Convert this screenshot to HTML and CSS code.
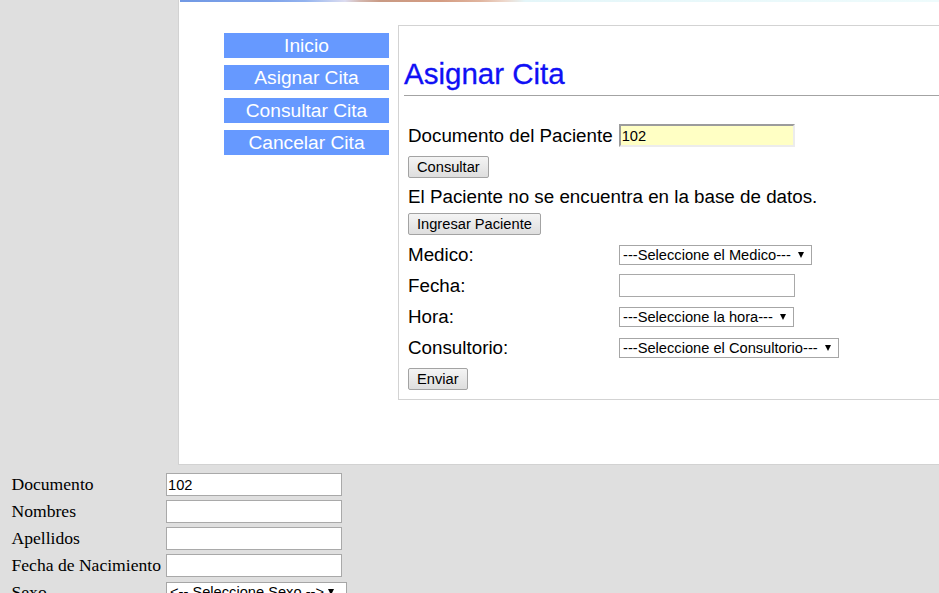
FILE: index.html
```html
<!DOCTYPE html>
<html lang="es">
<head>
<meta charset="utf-8">
<title>Asignar Cita</title>
<link rel="stylesheet" href="styles.css">
</head>
<body>
<div class="page">
  <div class="topbar"></div>
  <div class="main">
    <nav class="menu">
      <a class="menu-item">Inicio</a>
      <a class="menu-item">Asignar Cita</a>
      <a class="menu-item">Consultar Cita</a>
      <a class="menu-item">Cancelar Cita</a>
    </nav>
    <section class="panel">
      <h2 class="title">Asignar Cita</h2>
      <div class="panel-body">
        <div class="doc-row"><span>Documento del Paciente</span><input class="doc-input" type="text" value="102"></div>
        <button class="btn btn-consultar" type="button">Consultar</button>
        <p class="msg">El Paciente no se encuentra en la base de datos.</p>
        <button class="btn btn-ingresar" type="button">Ingresar Paciente</button>
        <div class="fields">
          <div class="field">
            <span class="field-label">Medico:</span>
            <span class="select-wrap"><select class="sel sel-medico"><option>---Seleccione el Medico---</option></select></span>
          </div>
          <div class="field">
            <span class="field-label">Fecha:</span>
            <input class="text-input" type="text">
          </div>
          <div class="field">
            <span class="field-label">Hora:</span>
            <span class="select-wrap"><select class="sel sel-hora"><option>---Seleccione la hora---</option></select></span>
          </div>
          <div class="field">
            <span class="field-label">Consultorio:</span>
            <span class="select-wrap"><select class="sel sel-consultorio"><option>---Seleccione el Consultorio---</option></select></span>
          </div>
        </div>
        <button class="btn btn-enviar" type="button">Enviar</button>
      </div>
    </section>
  </div>
</div>
<form class="patient">
  <label class="p-label">Documento</label><input class="p-input" type="text" value="102">
  <label class="p-label">Nombres</label><input class="p-input" type="text">
  <label class="p-label">Apellidos</label><input class="p-input" type="text">
  <label class="p-label">Fecha de Nacimiento</label><input class="p-input" type="text">
  <label class="p-label">Sexo</label><span class="select-wrap"><select class="sel sel-sexo"><option>&lt;-- Seleccione Sexo --&gt;</option></select></span>
</form>
</body>
</html>
```

FILE: styles.css
```css
html, body {
  margin: 0;
  padding: 0;
  overflow: hidden;
}
body {
  background: #dfdfdf;
  width: 939px;
  height: 593px;
  font-family: "Liberation Sans", Arial, sans-serif;
  color: #000;
}

.page {
  margin-left: 178px;
  height: 464px;
  background: #fff;
  border-left: 1px solid #d2d2d2;
  border-bottom: 1px solid #d2d2d2;
  overflow: hidden;
}
.topbar {
  height: 2px;
  margin-left: 1px;
  background: linear-gradient(to right,
    #7199e4 0px, #7fa3ea 90px, #93b3ef 125px, #b8c9f0 145px,
    #dcdcf0 165px, #d4b8b0 180px, #c99a84 200px, #d49c82 260px,
    #e0b49e 300px, #eed8cc 325px, #e4f6f9 345px, #eefbfc 100%);
}
.main {
  display: flex;
  align-items: flex-start;
  padding-left: 45px;
}

.menu {
  flex: 0 0 165px;
  width: 165px;
  margin-top: 31px;
  display: flex;
  flex-direction: column;
  gap: 7.3px;
}
.menu-item {
  display: block;
  height: 25px;
  line-height: 25px;
  background: #6699ff;
  color: #fff;
  text-align: center;
  font-size: 19.2px;
  text-decoration: none;
}

.panel {
  flex: 0 0 auto;
  margin-left: 9px;
  margin-top: 23px;
  width: 700px;
  border: 1px solid #d3d3d3;
  padding-bottom: 9px;
}
.title {
  margin: 0 0 0 5px;
  padding: 31px 0 4px 0;
  line-height: 34px;
  font-size: 29.5px;
  font-weight: normal;
  color: #1010f5;
  border-bottom: 1px solid #a3a3a3;
  -webkit-text-stroke: 0.3px #1010f5;
}
.panel-body {
  padding-left: 9px;
  display: flex;
  flex-direction: column;
  align-items: flex-start;
  font-size: 18.8px;
}
.doc-row {
  margin-top: 28px;
  height: 23px;
  line-height: 23px;
  display: flex;
  align-items: center;
  gap: 6px;
}
.doc-input {
  box-sizing: border-box;
  width: 176px;
  height: 23px;
  margin: 0;
  padding: 0 1px;
  background: #ffffc4;
  border-top: 2px solid #9c9c9c;
  border-left: 2px solid #9c9c9c;
  border-right: 2px solid #ececec;
  border-bottom: 2px solid #ececec;
  font-family: "Liberation Sans", Arial, sans-serif;
  font-size: 14.67px;
  color: #000;
}

.btn {
  box-sizing: border-box;
  height: 22px;
  margin: 0;
  padding: 0 8px;
  border: 1px solid #a3a3a3;
  border-radius: 2px;
  background: linear-gradient(#f4f4f4, #dedede);
  font-family: "Liberation Sans", Arial, sans-serif;
  font-size: 14.67px;
  color: #000;
  line-height: 20px;
}
.btn-consultar { margin-top: 9px; }
.btn-ingresar { margin-top: 5px; }
.btn-enviar { margin-top: 7px; }

.msg {
  margin: 7px 0 0 0;
  height: 23px;
  line-height: 23px;
}

.fields {
  margin-top: 6px;
  display: flex;
  flex-direction: column;
  gap: 4px;
}
.field {
  display: flex;
  align-items: center;
  height: 27px;
}
.field-label {
  width: 211px;
  line-height: 22px;
}
.text-input {
  box-sizing: border-box;
  width: 176px;
  height: 23px;
  margin: 0;
  border: 1px solid #a9a9a9;
  background: #fff;
  padding: 0 2px;
}

.select-wrap {
  position: relative;
  display: inline-block;
  height: 20px;
}
.select-wrap::after {
  content: "";
  position: absolute;
  right: 8px;
  top: 7px;
  border-left: 3.5px solid transparent;
  border-right: 3.5px solid transparent;
  border-top: 6px solid #000;
  pointer-events: none;
}
.sel {
  -webkit-appearance: none;
  appearance: none;
  box-sizing: border-box;
  height: 20px;
  margin: 0;
  padding: 0 0 0 3px;
  border: 1px solid #a6a6a6;
  border-radius: 0;
  background: #fff;
  font-family: "Liberation Sans", Arial, sans-serif;
  font-size: 14.67px;
  line-height: 18px;
  color: #000;
  display: block;
}
.sel-medico { width: 193px; }
.sel-hora { width: 175px; }
.sel-consultorio { width: 220px; }
.sel-sexo { width: 181px; }

.patient {
  margin: 8px 0 0 0;
  padding-left: 11.5px;
  display: grid;
  grid-template-columns: 154.5px 176px;
  grid-auto-rows: 22px;
  row-gap: 5px;
  align-items: start;
}
.p-label {
  font-family: "Liberation Serif", "Times New Roman", serif;
  font-size: 17.6px;
  line-height: 22px;
  white-space: nowrap;
}
.p-input {
  box-sizing: border-box;
  width: 176px;
  height: 23px;
  margin: 0;
  padding: 0 1px;
  border: 1px solid #a9a9a9;
  background: #fff;
  font-family: "Liberation Sans", Arial, sans-serif;
  font-size: 14.67px;
  color: #000;
}
.patient .select-wrap { margin-top: 1px; }
```
